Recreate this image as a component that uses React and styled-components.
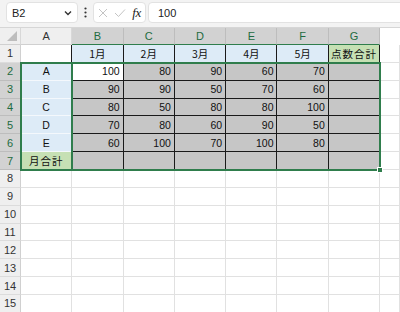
import React from 'react';
import styled, { createGlobalStyle } from 'styled-components';

const Global = createGlobalStyle`
  html, body { margin: 0; padding: 0; background: #fff; overflow: hidden; }
  body { font-family: "Liberation Sans", "Noto Sans CJK JP", sans-serif; }
  #root { width: 400px; height: 312px; }
`;

const GREEN = '#2f7d4c';

const Page = styled.div`
  width: 400px;
  height: 312px;
  display: flex;
  flex-direction: column;
  overflow: hidden;
`;

const Toolbar = styled.div`
  flex: none;
  height: 28px;
  background: #f3f3f3;
  border-bottom: 1px solid #d6d6d6;
  display: flex;
  align-items: center;
  padding-left: 6px;
  padding-bottom: 2px;
  box-sizing: border-box;
`;

const Box = styled.div`
  height: 21px;
  background: #fff;
  border: 1px solid #e2e2e2;
  border-radius: 4px;
  box-sizing: border-box;
  display: flex;
  align-items: center;
  font-size: 11px;
  color: #222;
`;

const NameBox = styled(Box)`
  width: 72px;
  padding: 0 5px 0 5px;
  justify-content: space-between;
`;

const Dots = styled.div`
  width: 15px;
  display: flex;
  justify-content: center;
`;

const FxBox = styled(Box)`
  width: 53px;
  padding: 0 4px;
  justify-content: space-between;
`;

const FormulaBox = styled(Box)`
  flex: 1;
  margin-left: 2px;
  margin-right: -6px;
  padding-left: 9px;
`;

const Fx = styled.span`
  font-family: "Liberation Serif", serif;
  font-style: italic;
  font-size: 13px;
  color: #222;
  letter-spacing: -0.3px;
`;

const Sheet = styled.div`
  flex: 1;
  display: grid;
  grid-template-columns: 21px repeat(7, 51.3px) 1fr;
  grid-template-rows: 17px repeat(15, 17.86px);
  position: relative;
`;

const Placed = styled.div`
  grid-row: ${(p) => p.$r + 1};
  grid-column: ${(p) => p.$c + 1};
  box-sizing: border-box;
`;

const Corner = styled(Placed)`
  background: #efefef;
  border-right: 1px solid #d8d8d8;
  border-bottom: 1px solid #d0d0d0;
  display: flex;
  align-items: flex-end;
  justify-content: flex-end;
  padding: 0 3px 3px 0;
`;

const ColHead = styled(Placed)`
  background: ${(p) => (p.$blank ? '#fff' : p.$sel ? '#d2d2d2' : '#efefef')};
  color: ${(p) => (p.$sel ? '#1e6b40' : '#333')};
  border-right: 1px solid ${(p) => (p.$blank ? '#fff' : p.$sel ? '#bdbdbd' : '#d8d8d8')};
  border-bottom: ${(p) => (p.$blank ? '1px solid #fff' : p.$sel ? `1px solid ${GREEN}` : '1px solid #d0d0d0')};
  font-size: 11px;
  display: flex;
  align-items: center;
  justify-content: center;
`;

const RowHead = styled(Placed)`
  background: ${(p) => (p.$sel ? '#d2d2d2' : '#efefef')};
  color: ${(p) => (p.$sel ? '#1e6b40' : '#333')};
  border-right: 1px solid ${(p) => (p.$sel ? GREEN : '#d0d0d0')};
  border-bottom: 1px solid ${(p) => (p.$sel ? '#bdbdbd' : '#dcdcdc')};
  font-size: 11px;
  display: flex;
  align-items: center;
  justify-content: center;
`;

const Cell = styled(Placed)`
  background: ${(p) => p.$bg};
  border-right: 1px solid ${(p) => p.$br};
  border-bottom: 1px solid ${(p) => p.$bb};
  font-size: 10.5px;
  color: #111;
  display: flex;
  align-items: center;
  justify-content: ${(p) => (p.$align === 'right' ? 'flex-end' : 'center')};
  padding: 0 3px;
  letter-spacing: ${(p) => (p.$wide ? '1px' : '0')};
  font-family: ${(p) => (p.$jp ? '"Noto Sans CJK JP", sans-serif' : '"Liberation Sans", sans-serif')};
  white-space: nowrap;
  overflow: hidden;
`;

const Outline = styled.div`
  grid-column: 2 / 9;
  grid-row: 3 / 9;
  margin: -1px -1px -1px -1px;
  border: 2px solid ${GREEN};
  pointer-events: none;
  position: relative;
  z-index: 2;
`;

const Divider = styled.div`
  grid-column: 3 / 4;
  grid-row: 3 / 9;
  margin-left: -1px;
  border-left: 2px solid ${GREEN};
  pointer-events: none;
  z-index: 2;
`;

const Handle = styled.div`
  position: absolute;
  right: -4px;
  bottom: -4px;
  width: 4px;
  height: 4px;
  background: ${GREEN};
  border: 1px solid #fff;
`;

const cols = ['A', 'B', 'C', 'D', 'E', 'F', 'G', ''];
const months = ['1月', '2月', '3月', '4月', '5月'];
const names = ['A', 'B', 'C', 'D', 'E'];
const data = [
  [100, 80, 90, 60, 70],
  [90, 90, 50, 70, 60],
  [80, 50, 80, 80, 100],
  [70, 80, 60, 90, 50],
  [60, 100, 70, 100, 80],
];

const BLUE = '#ddebf7';
const LGREEN = '#c6e0b4';
const SHADE = '#c6c6c6';
const GRID = '#e1e1e1';
const LINE = '#1a1a1a';

function cellProps(r, c) {
  let bg = '#fff';
  let br = GRID;
  let bb = GRID;
  let text = '';
  let align = 'center';
  let jp = false;
  let wide = false;
  if (r === 1) {
    if (c === 0) {
      br = LINE;
    } else if (c >= 1 && c <= 5) {
      bg = BLUE;
      br = LINE;
      bb = LINE;
      text = months[c - 1];
      jp = true;
    } else if (c === 6) {
      bg = LGREEN;
      br = LINE;
      bb = LINE;
      text = '点数合計';
      jp = true;
      wide = true;
    }
  } else if (r >= 2 && r <= 7) {
    if (c === 0) {
      bg = r === 7 ? LGREEN : BLUE;
      br = LINE;
      bb = r === 7 ? LINE : '#f4f8fc';
      text = r === 7 ? '月合計' : names[r - 2];
      jp = r === 7;
      wide = r === 7;
    } else if (c >= 1 && c <= 6) {
      bg = r === 2 && c === 1 ? '#fff' : SHADE;
      br = LINE;
      bb = LINE;
      if (r <= 6 && c <= 5) {
        text = String(data[r - 2][c - 1]);
        align = 'right';
      }
    }
  }
  return { bg, br, bb, text, align, jp, wide };
}

function Chevron() {
  return (
    <svg width="8" height="6" viewBox="0 0 8 6">
      <path d="M1 1.5 L4 4.5 L7 1.5" fill="none" stroke="#333" strokeWidth="1.4" />
    </svg>
  );
}

function VDots() {
  return (
    <svg width="3" height="11" viewBox="0 0 3 11">
      <circle cx="1.5" cy="1.5" r="1.1" fill="#333" />
      <circle cx="1.5" cy="5.5" r="1.1" fill="#333" />
      <circle cx="1.5" cy="9.5" r="1.1" fill="#333" />
    </svg>
  );
}

function Cross() {
  return (
    <svg width="10" height="10" viewBox="0 0 10 10">
      <path d="M1 1 L9 9 M9 1 L1 9" stroke="#c4c4c4" strokeWidth="1" fill="none" />
    </svg>
  );
}

function Check() {
  return (
    <svg width="12" height="10" viewBox="0 0 12 10">
      <path d="M1 5 L4.5 8.5 L11 1.5" stroke="#c4c4c4" strokeWidth="1" fill="none" />
    </svg>
  );
}

function CornerTri() {
  return (
    <svg width="10" height="10" viewBox="0 0 10 10">
      <path d="M10 0 L10 10 L0 10 Z" fill="#bdbdbd" />
    </svg>
  );
}

export default function App() {
  const rows = [];
  for (let r = 1; r <= 15; r++) {
    const sel = r >= 2 && r <= 7;
    rows.push(
      <RowHead key={`h${r}`} $r={r} $c={0} $sel={sel}>
        {r}
      </RowHead>
    );
    for (let c = 0; c < 8; c++) {
      const p = cellProps(r, c);
      rows.push(
        <Cell
          key={`${r}-${c}`}
          $r={r}
          $c={c + 1}
          $bg={p.bg}
          $br={p.br}
          $bb={p.bb}
          $align={p.align}
          $jp={p.jp}
          $wide={p.wide}
        >
          {p.text}
        </Cell>
      );
    }
  }
  return (
    <Page>
      <Global />
      <Toolbar>
        <NameBox>
          <span>B2</span>
          <Chevron />
        </NameBox>
        <Dots>
          <VDots />
        </Dots>
        <FxBox>
          <Cross />
          <Check />
          <Fx>fx</Fx>
        </FxBox>
        <FormulaBox>100</FormulaBox>
      </Toolbar>
      <Sheet>
        <Corner $r={0} $c={0}>
          <CornerTri />
        </Corner>
        {cols.map((c, i) => (
          <ColHead key={i} $r={0} $c={i + 1} $sel={i >= 1 && i <= 6} $blank={i === 7}>
            {c}
          </ColHead>
        ))}
        {rows}
        <Outline>
          <Handle />
        </Outline>
        <Divider />
      </Sheet>
    </Page>
  );
}
